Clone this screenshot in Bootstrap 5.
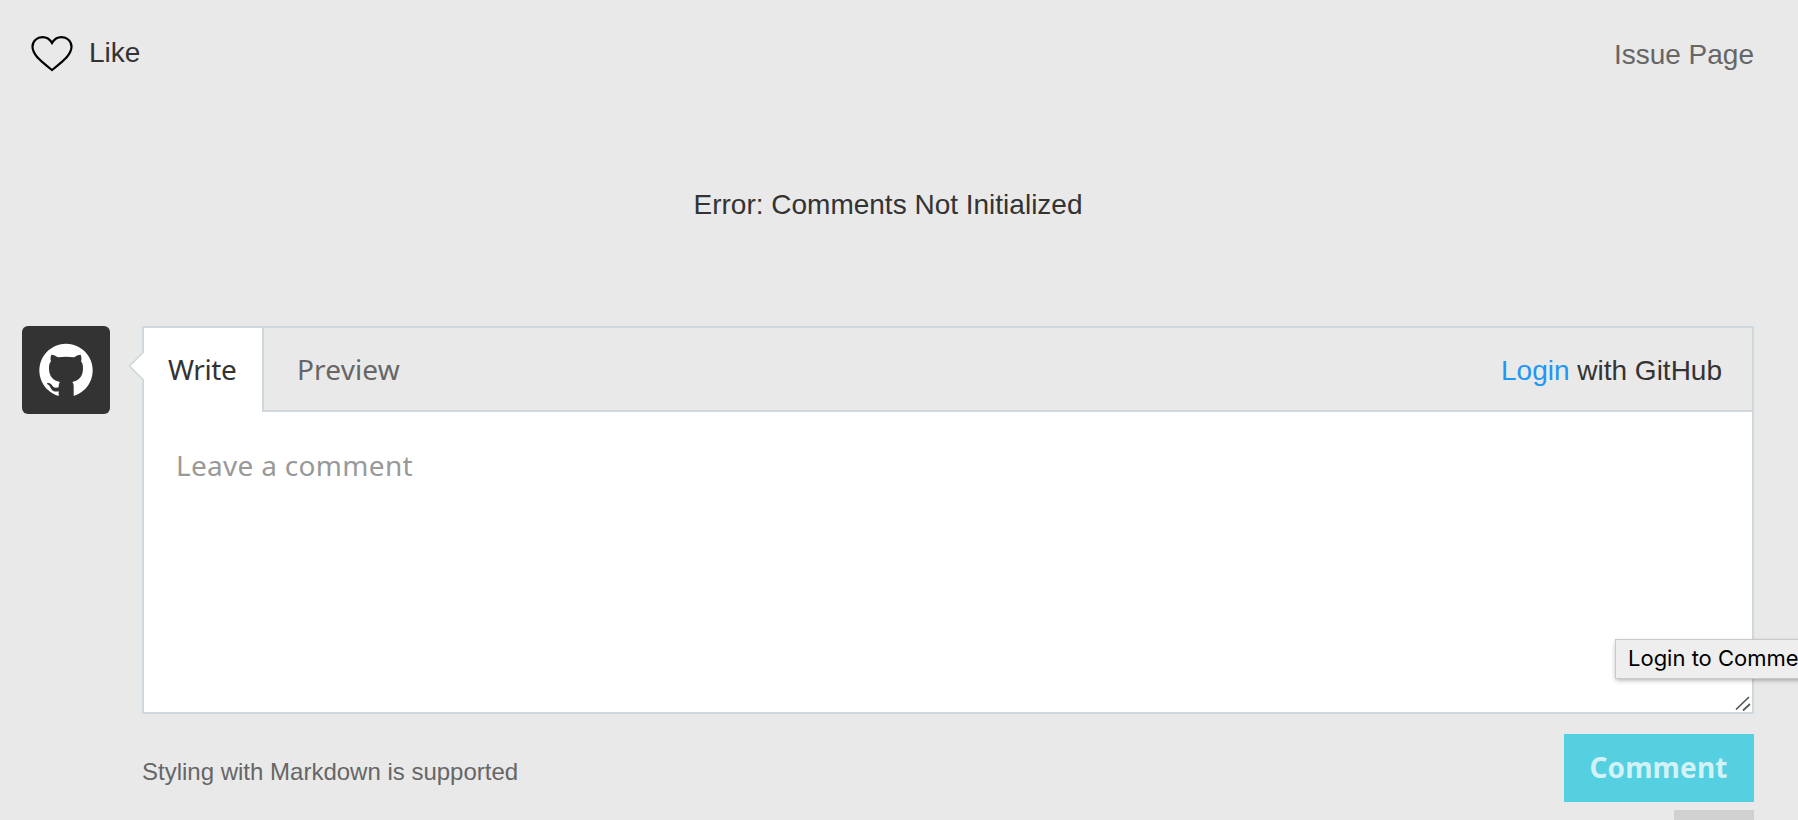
<!DOCTYPE html>
<html lang="en">
<head>
<meta charset="utf-8">
<meta name="viewport" content="width=device-width, initial-scale=1">
<title>Comments</title>
<link href="https://cdn.jsdelivr.net/npm/bootstrap@5.3.0/dist/css/bootstrap.min.css" rel="stylesheet">
<style>
  body { background: #e9e9e9; color: #333; font: 28px/40px "Liberation Sans", Arial, sans-serif; height: 820px; }
  .page { height: 820px; padding: 0 44px 0 22px; }
  .topbar { height: 106px; padding-top: 32px; }
  .like { padding-left: 8px; gap: 15px; }
  .like span { padding-top: 1px; }
  .issue { padding-top: 3px; }
  .muted { color: #666; }
  .error { height: 220px; padding-top: 79px; }
  .lucida { font-family: "Noto Sans", sans-serif; }
  .editor { gap: 32px; }
  .avatar { width: 88px; height: 88px; border-radius: 6px; background: #333; }
  .editor-box { height: 388px; border: 2px solid #cfd8dc; background: #fff; }
  .pointer-tip { left: -16px; top: 23px; }
  .editor-head { height: 84px; }
  .tab-write { width: 118px; padding: 0 0 2px 24px; letter-spacing: -.4px; }
  .tab-rest { background: #e9e9e9; border-left: 2px solid #cfd8dc; border-bottom: 2px solid #cfd8dc; padding: 0 30px 0 33px; }
  .tab-preview { letter-spacing: .15px; }
  .login { padding-top: 3px; }
  .blue { color: #2196f3; }
  .editor-input.form-control { background: #fff; border: 0; border-radius: 0; resize: none; padding: 33px 32px; font-size: 28px; line-height: 40px; letter-spacing: .3px; overflow: hidden; }
  .editor-input.form-control::placeholder { color: #999; }
  .grip { right: 1px; bottom: 0; }
  .foot { padding-top: 20px; }
  .styling { padding-top: 18px; font-size: 24px; }
  .btn-comment.btn { width: 190px; height: 68px; background: #55d0e0; color: #d2f2f7; border: 0; border-radius: 0; padding: 0 1px 2px 0; font-size: 28px; font-weight: 700; letter-spacing: .15px; }
  .next-btn { width: 80px; height: 10px; margin-top: 8px; background: #d1d1d1; }
  .hint { left: 1616px; top: 640px; width: 220px; height: 38px; padding-left: 12px; background: #eee; color: #000; font: 22px/36px Inter, sans-serif; box-shadow: 0 0 0 1px #c9c9c9, 0 2px 5px rgba(0,0,0,.35); }
</style>
</head>
<body class="overflow-hidden position-relative">
<main class="page d-flex flex-column">
  <header class="topbar d-flex justify-content-between align-items-start">
    <div class="like d-flex align-items-start">
      <svg width="44" height="42" viewBox="0 0 44 42" fill="none" stroke="#000" stroke-width="2.2"><path d="M22 38C13 30.500 2.500 23.500 2.500 14.800C2.500 9 7.200 5.100 12.500 5.100C16.700 5.100 20 7.500 22 11C24 7.500 27.300 5.100 31.500 5.100C36.800 5.100 41.500 9 41.500 14.800C41.500 23.500 31 30.500 22 38Z"/></svg>
      <span>Like</span>
    </div>
    <span class="issue muted text-nowrap">Issue Page</span>
  </header>
  <div class="error text-center">Error: Comments Not Initialized</div>
  <section class="editor d-flex">
    <div class="avatar d-flex flex-shrink-0 align-items-center justify-content-center">
      <svg width="56" height="56" viewBox="0 0 168 168">
        <path fill="#fff" d="M62 162A80 80 0 1 1 106 162Z"/>
        <path fill="#333" d="M40 38C47 38 54 42 60 46Q84 42 108 46C114 42 121 38 128 38C131 46 131 52 129 58C134 64 135 70 135 79C135 105 122 116 103 120C106 124 107 128 107 134L107 168L62 168L62 148C43 151 40 141 36 134C32 127 26 127 27 124C34 120 40 126 43 131C48 138 54 138 62 136C62 128 63 123 66 120C46 116 33 105 33 79C33 70 34 64 39 58C37 52 37 46 40 38Z"/>
      </svg>
    </div>
    <div class="flex-grow-1">
      <div class="editor-box position-relative d-flex flex-column">
        <svg class="pointer-tip position-absolute" width="17" height="30" viewBox="0 0 17 30"><path d="M17 .5L2 15L17 29.500Z" fill="#fff"/><path d="M15 1.500L1.500 15L15 28.500" fill="none" stroke="#cfd8dc" stroke-width="1.600"/></svg>
        <div class="editor-head d-flex">
          <div class="tab-write lucida d-flex align-items-center">Write</div>
          <div class="tab-rest flex-grow-1 d-flex align-items-center justify-content-between">
            <span class="tab-preview lucida muted">Preview</span>
            <span class="login"><span class="blue">Login</span> with GitHub</span>
          </div>
        </div>
        <textarea class="editor-input form-control lucida flex-grow-1" placeholder="Leave a comment"></textarea>
        <svg class="grip position-absolute" width="16" height="16" viewBox="0 0 16 16" stroke="#555" stroke-width="1.700" stroke-linecap="round"><path d="M1.500 13L13.500 1.500M8.500 14L14.500 8.500"/></svg>
      </div>
      <div class="foot d-flex justify-content-between align-items-start">
        <span class="styling muted">Styling with Markdown is supported</span>
        <div class="d-flex flex-column align-items-end">
          <button class="btn btn-comment lucida" type="button">Comment</button>
          <div class="next-btn"></div>
        </div>
      </div>
    </div>
  </section>
</main>
<div class="hint position-absolute text-nowrap" role="tooltip">Login to Comment</div>
<script src="https://cdn.jsdelivr.net/npm/bootstrap@5.3.0/dist/js/bootstrap.bundle.min.js"></script>
</body>
</html>
